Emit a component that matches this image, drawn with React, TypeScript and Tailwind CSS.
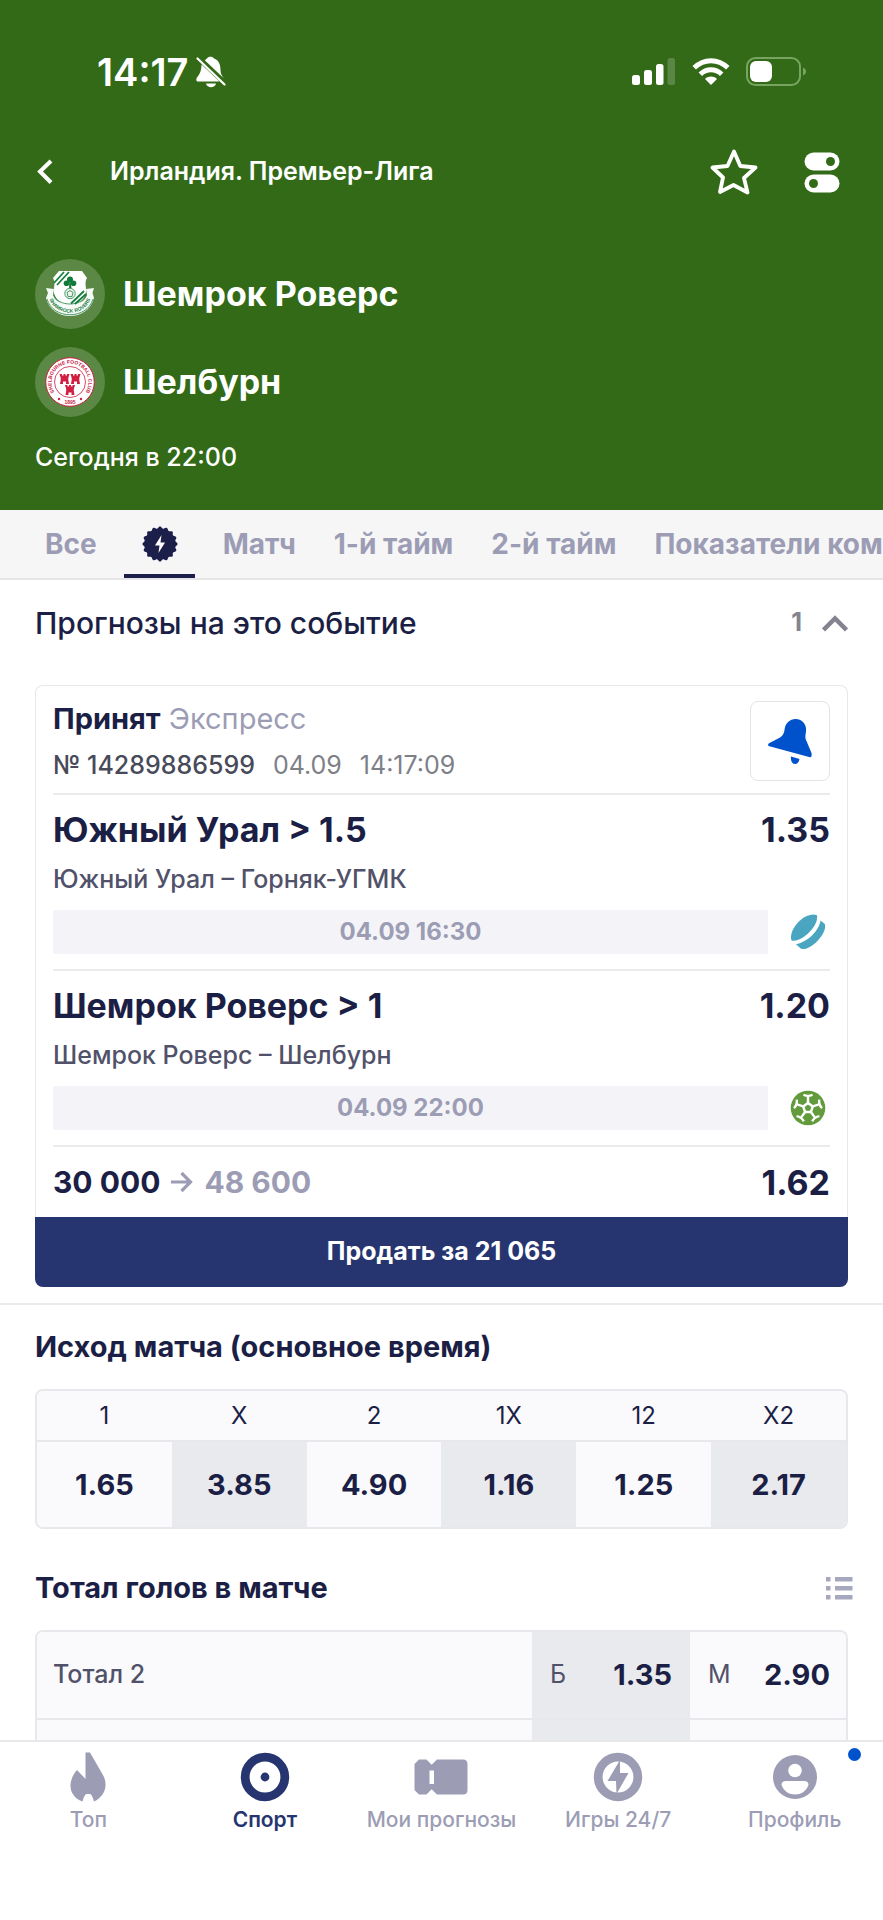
import React from "react";

type Leg = {
  title: string;
  odd: string;
  match: string;
  start: string;
  sport: "hockey" | "football";
};

const legs: Leg[] = [
  {
    title: "Южный Урал > 1.5",
    odd: "1.35",
    match: "Южный Урал – Горняк-УГМК",
    start: "04.09 16:30",
    sport: "hockey",
  },
  {
    title: "Шемрок Роверс > 1",
    odd: "1.20",
    match: "Шемрок Роверс – Шелбурн",
    start: "04.09 22:00",
    sport: "football",
  },
];

const outcomes = [
  { label: "1", odd: "1.65" },
  { label: "X", odd: "3.85" },
  { label: "2", odd: "4.90" },
  { label: "1X", odd: "1.16" },
  { label: "12", odd: "1.25" },
  { label: "X2", odd: "2.17" },
];

const BellOffIcon = () => (
  <svg width="30" height="33" viewBox="0 0 30 33" fill="#fff">
    <path d="M8 6C9 4 10 3 11 2.500C12 0 17 0 18 2.500C23 4 24.500 9 24.500 14C24.500 18 26 20 28 22.500L9 4.500Z" />
    <path d="M5.500 8.500L23.500 25.500H2C0 25.500 0 23 1 21.500C4 18 5.500 14 5.500 8.500Z" />
    <path d="M10 27.500H20C19 32.500 11 32.500 10 27.500Z" />
    <path d="M1.500 2.500L28.500 28.500" stroke="#fff" strokeWidth="2.200" strokeLinecap="round" />
  </svg>
);

const SignalIcon = () => (
  <svg width="44" height="28" viewBox="0 0 44 28" fill="#fff">
    <rect x="0" y="17" width="8" height="10" rx="2.500" />
    <rect x="12" y="12" width="8" height="15" rx="2.500" />
    <rect x="24" y="6" width="7.500" height="21" rx="2.500" />
    <rect x="35.500" y="0" width="7.500" height="27" rx="2.500" opacity="0.2" />
  </svg>
);

const WifiIcon = () => (
  <svg width="38" height="28" viewBox="0 0 38 28" fill="none" stroke="#fff" strokeWidth="5">
    <path d="M2.200 9.800C12 0.300 26 0.300 35.800 9.800" />
    <path d="M8.300 16.200C14.500 10.300 23.500 10.300 29.700 16.200" />
    <path d="M13 21C16.500 17.800 21.500 17.800 25 21L19 27Z" fill="#fff" stroke="none" />
  </svg>
);

const BatteryIcon = () => (
  <svg width="62" height="30" viewBox="0 0 62 30">
    <rect x="1" y="1" width="53" height="27" rx="8.500" fill="none" stroke="#77a45f" strokeWidth="2" />
    <rect x="4" y="4" width="22" height="21" rx="6" fill="#fff" />
    <path d="M57 10.500C61 12 61 17 57 18.500Z" fill="#77a45f" />
  </svg>
);

const StarIcon = () => (
  <svg width="48" height="46" viewBox="0 0 48 46" fill="none" stroke="#fff" strokeWidth="3.800" strokeLinejoin="round">
    <path d="M24 2.500L30.300 17L45.500 18.500L34 29L37.500 43.500L23.500 36L10 43L13 28.500L2.500 18.500L17.500 17Z" />
  </svg>
);

const TogglesIcon = () => (
  <svg width="36" height="41" viewBox="0 0 36 41">
    <rect x="0.500" y="0.500" width="35" height="18" rx="9" fill="#fff" />
    <circle cx="26.500" cy="9.500" r="4.500" fill="#326a17" />
    <rect x="0.500" y="22.500" width="35" height="18" rx="9" fill="#fff" />
    <circle cx="9.500" cy="31.500" r="4.500" fill="#326a17" />
  </svg>
);

const ShamrockCrest = () => (
  <svg width="50" height="48" viewBox="0 0 50 48">
    <defs>
      <path id="ribbon" d="M3.500 25C7 48.500 43 48.500 46.500 25" />
    </defs>
    <path d="M14 1H37L42 8C38 14 44 20 39 28C36 33 30 36 25 38C20 36 14 33 11 28C6 20 12 14 8 8Z" fill="#fff" />
    <path d="M9 13L19 2M12 15L24 2" stroke="#15803f" strokeWidth="1.800" />
    <g fill="#0f7a3a">
      <circle cx="25" cy="9.500" r="3" />
      <circle cx="21.500" cy="13.300" r="2.800" />
      <circle cx="28.500" cy="13.300" r="2.800" />
      <path d="M24.300 12H25.700L26.500 18H24Z" />
    </g>
    <path d="M1 18L9 19L8 25C12 38 38 38 42 25L41 19L49 18L47.500 23L49 28C43 52 7 52 1 28L3 23Z" fill="#f4faf5" />
    <path d="M9 25C13 37 37 37 41 25M2 29C8 50 42 50 48 29" fill="none" stroke="#237f45" strokeWidth="0.800" />
    <text fontSize="5" fontWeight="700" fill="#1c7a40" textAnchor="middle" fontFamily="Liberation Sans, sans-serif">
      <textPath href="#ribbon" startOffset="50%">
        SHAMROCK ROVERS
      </textPath>
    </text>
    <circle cx="25" cy="23.500" r="5.200" fill="#e9f4ec" stroke="#4c9967" strokeWidth="1" />
    <path d="M25 20.500L28 22.500L27 26.500H23L22 22.500Z" fill="none" stroke="#4c9967" strokeWidth="1" />
    <path d="M26 33.500L39 21M30 34L41 24" stroke="#15803f" strokeWidth="1.800" />
  </svg>
);

const castle = "M0 0H2.500V1.500H4V0H6V1.500H7.500V0H10L8.800 4V6L9.500 10H6.500V7.500H3.500V10H0.500L1.200 6V4Z";

const ShelbourneCrest = () => (
  <svg width="50" height="50" viewBox="0 0 50 50">
    <defs>
      <path id="ring" d="M11.900 38.100A18.500 18.500 0 1 1 38.100 38.100" />
    </defs>
    <circle cx="25" cy="25" r="24.300" fill="#fff" stroke="#c8203f" strokeWidth="1" />
    <circle cx="25" cy="25" r="15.500" fill="none" stroke="#c8203f" strokeWidth="0.800" />
    <text fontSize="5" fontWeight="700" fill="#c8203f" textAnchor="middle" fontFamily="Liberation Sans, sans-serif">
      <textPath href="#ring" startOffset="50%">
        SHELBOURNE FOOTBALL CLUB
      </textPath>
    </text>
    <text x="25" y="47" fontSize="5" fontWeight="700" fill="#c8203f" textAnchor="middle" fontFamily="Liberation Sans, sans-serif">
      1895
    </text>
    <circle cx="14" cy="42" r="1.200" fill="#c8203f" />
    <circle cx="36" cy="42" r="1.200" fill="#c8203f" />
    <g fill="#d01f42">
      <path d={castle} transform="translate(14.500 17)" />
      <path d={castle} transform="translate(25.500 17)" />
      <path d={castle} transform="translate(20 28)" />
    </g>
  </svg>
);

// wavy edge of the round badge, 16 bumps
const badgePoints = Array.from({ length: 160 }, (_, i) => {
  const a = (i / 160) * Math.PI * 2;
  const r = 16.6 + Math.cos(a * 16);
  return `${(18 + Math.sin(a) * r).toFixed(2)},${(18 - Math.cos(a) * r).toFixed(2)}`;
}).join(" ");

const BadgeIcon = () => (
  <svg width="36" height="36" viewBox="0 0 36 36">
    <polygon points={badgePoints} fill="#1c1f4a" />
    <path d="M19.500 9L13 19.500H17.500L16.500 27L23 16.500H18.500Z" fill="#fff" />
  </svg>
);

const BellIcon = () => (
  <svg width="46" height="47" viewBox="0 0 46 47" fill="#0052cc">
    <path d="M1.500 28C0.500 26.500 1.500 25.500 3 24.800L13 19.500C16 17.500 17 15 17.500 12C18 5 23 1 28.500 1C35.500 1 40 7 39 13.500C38.300 18 38 20 39.500 23L44.500 35C45 37.500 44.500 39.500 43 39.200Z" />
    <path d="M24 38.500L32.500 41C32 44.500 30 46 28 46C25 46 23.500 42.500 24 38.500Z" />
  </svg>
);

const PuckIcon = () => (
  <svg width="36" height="36" viewBox="0 0 36 36" fill="#4aa5c1">
    <path d="M1.500 26.500C-0.500 20 4 12 10 6.500C16 1.500 22 -0.500 27 1.200C28 7 24 14 18 19.500C12.500 24.500 6.500 27.500 1.500 26.500Z" />
    <path d="M6 30.200C11 29.500 17 26 22 21.500C27 16.500 30 11 30.500 6.500L34.800 10C36.500 15 32 23 26 28.500C20.500 33.500 15 36 11 34.800Z" />
  </svg>
);

const BallIcon = () => (
  <svg width="36" height="36" viewBox="-18 -18 36 36">
    <circle r="17.300" fill="#629b3c" />
    <g fill="none" stroke="#fff" strokeWidth="2.400">
      <path d="M0 -5L4.800 -1.500L2.900 4H-2.900L-4.800 -1.500Z" />
      {[0, 72, 144, 216, 288].map((angle) => (
        <path key={angle} d="M0 -5V-12.500M-4.500 -13.300C-2 -12 2 -12 4.500 -13.300" transform={`rotate(${angle})`} />
      ))}
    </g>
  </svg>
);

const ListIcon = () => (
  <svg width="27" height="23" viewBox="0 0 27 23" fill="#a6a8bf">
    <path d="M0 0H4.500V4.500H0ZM9 0H26.500V4.500H9ZM0 9H4.500V13.500H0ZM9 9H26.500V13.500H9ZM0 18H4.500V22.500H0ZM9 18H26.500V22.500H9Z" />
  </svg>
);

const FlameIcon = () => (
  <svg width="36" height="50" viewBox="0 0 36 50" fill="currentColor">
    <path d="M15.500 0.500H20L33.500 24C38.500 34 34 45 24 49.500C23 46 21.500 42 20 42H16.500C15 42 13.500 46 12.500 49.500C3 46 -0.500 38 0.700 31C1.500 26 4 21 7 18L15.500 27Z" />
  </svg>
);

const SportIcon = () => (
  <svg width="50" height="50" viewBox="0 0 50 50">
    <circle cx="25" cy="25" r="19.800" fill="none" stroke="currentColor" strokeWidth="8.800" />
    <circle cx="25" cy="25" r="4.400" fill="currentColor" />
  </svg>
);

const TicketIcon = () => (
  <svg width="54" height="50" viewBox="0 0 54 50" fill="currentColor" fillRule="evenodd">
    <path d="M5 7.500H12.500L17.700 12.700L23 7.500H49Q53.500 7.500 53.500 12V38Q53.500 42.500 49 42.500H23L17.700 37.300L12.500 42.500H5L0.500 38V12ZM15.500 18.500V32H20V18.500Z" />
  </svg>
);

const GamesIcon = () => (
  <svg width="50" height="50" viewBox="0 0 50 50">
    <circle cx="25" cy="25" r="19.800" fill="none" stroke="currentColor" strokeWidth="8.800" />
    <path d="M27 8L14.500 29H23L23.500 42L35.500 21H27Z" fill="currentColor" />
  </svg>
);

const ProfileIcon = () => (
  <svg width="50" height="50" viewBox="0 0 50 50">
    <circle cx="25" cy="25" r="22" fill="currentColor" />
    <circle cx="25" cy="18.500" r="6.800" fill="#fff" />
    <path d="M16 29H34Q38.500 29 38.500 33C36 39.500 31 42.500 25 42.500C19 42.500 14 39.500 11.500 33Q11.500 29 16 29Z" fill="#fff" />
  </svg>
);

const tabs = ["Матч", "1-й тайм", "2-й тайм", "Показатели команд"];

const navItems = [
  { label: "Топ", icon: <FlameIcon /> },
  { label: "Спорт", icon: <SportIcon />, active: true },
  { label: "Мои прогнозы", icon: <TicketIcon /> },
  { label: "Игры 24/7", icon: <GamesIcon /> },
  { label: "Профиль", icon: <ProfileIcon />, dot: true },
];

const Header = () => (
  <header className="bg-[#326a17] px-[35px] pb-[37px] text-white">
    <div className="flex h-36 items-center justify-between pr-10 pl-[62px]">
      <div className="flex items-center gap-2">
        <span className="text-[38px] font-semibold">14:17</span>
        <BellOffIcon />
      </div>
      <div className="flex items-center gap-4">
        <SignalIcon />
        <WifiIcon />
        <BatteryIcon />
      </div>
    </div>
    <div className="flex h-14 items-center">
      <button aria-label="Назад" className="w-[75px]">
        <svg width="20" height="26" viewBox="0 0 20 26" fill="none" stroke="#fff" strokeWidth="4">
          <path d="M16 2L5 12.500L16 23.500" />
        </svg>
      </button>
      <h1 className="flex-1 text-[25px] font-semibold">Ирландия. Премьер-Лига</h1>
      <div className="flex items-center gap-[46px] pr-2">
        <button aria-label="В избранное">
          <StarIcon />
        </button>
        <button aria-label="Настройки">
          <TogglesIcon />
        </button>
      </div>
    </div>
    <div className="mt-[59px] flex flex-col gap-[18px]">
      <div className="flex items-center gap-[18px]">
        <div className="flex size-[70px] items-center justify-center rounded-full bg-[#5b8845]">
          <ShamrockCrest />
        </div>
        <span className="text-[34px] leading-10 font-bold">Шемрок Роверс</span>
      </div>
      <div className="flex items-center gap-[18px]">
        <div className="flex size-[70px] items-center justify-center rounded-full bg-[#5b8845]">
          <ShelbourneCrest />
        </div>
        <span className="text-[34px] leading-10 font-bold">Шелбурн</span>
      </div>
    </div>
    <p className="mt-6 text-[25px] leading-8 font-medium">Сегодня в 22:00</p>
  </header>
);

const Tabs = () => (
  <nav className="flex h-[70px] overflow-hidden border-b-2 border-[#e6e6e8] bg-[#f6f6f7] pl-[26px] text-[28px] font-bold whitespace-nowrap text-[#9c9db5]">
    <button className="px-[19px]">Все</button>
    <button aria-label="Прогнозы" className="flex w-[88px] shrink-0 flex-col items-center justify-between pt-4">
      <BadgeIcon />
      <span className="h-1 w-[71px] bg-[#1c1f4a]" />
    </button>
    {tabs.map((tab) => (
      <button key={tab} className="px-[19px]">
        {tab}
      </button>
    ))}
  </nav>
);

const BetLeg = ({ leg }: { leg: Leg }) => (
  <div className="border-b-2 border-[#ebebed] py-[15px]">
    <div className="flex justify-between text-[34px] leading-10 font-bold">
      <h3>{leg.title}</h3>
      <span>{leg.odd}</span>
    </div>
    <p className="mt-[13px] text-[25px] leading-8 font-medium text-[#51526a]">{leg.match}</p>
    <div className="mt-[15px] flex items-center gap-[22px]">
      <div className="flex h-11 flex-1 items-center justify-center bg-[#f4f4f8] text-2xl font-bold text-[#9c9db5]">
        {leg.start}
      </div>
      <div className="pr-1">{leg.sport === "hockey" ? <PuckIcon /> : <BallIcon />}</div>
    </div>
  </div>
);

const BetCard = () => (
  <article className="mx-[35px] mt-[19px] mb-4">
    <div className="rounded-t-lg border border-b-0 border-[#e8e8ea] px-[17px]">
      <div className="flex justify-between border-b-2 border-[#ebebed] pt-[15px] pb-3">
        <div>
          <p className="text-[29px] leading-9">
            <span className="font-bold">Принят</span> <span className="text-[#9c9db5]">Экспресс</span>
          </p>
          <p className="mt-3 flex gap-[18px] text-[25px] leading-8 text-[#7e8088]">
            <span className="font-medium text-[#484a59]">№ 14289886599</span>
            <span>04.09</span>
            <span>14:17:09</span>
          </p>
        </div>
        <button
          aria-label="Уведомления"
          className="flex size-20 items-center justify-center rounded-lg border border-[#e3e3e6]"
        >
          <BellIcon />
        </button>
      </div>
      {legs.map((leg) => (
        <BetLeg key={leg.title} leg={leg} />
      ))}
      <div className="flex h-[70px] items-center justify-between text-[34px] font-bold">
        <p className="flex items-center gap-[11px] text-[30px]">
          30 000
          <svg width="22" height="22" viewBox="0 0 22 22" fill="none" stroke="#9c9db5" strokeWidth="3.200">
            <path d="M0 11H19M10.500 2L19.500 11L10.500 20" />
          </svg>
          <span className="text-[#9c9db5]">48 600</span>
        </p>
        <span>1.62</span>
      </div>
    </div>
    <button className="h-[70px] w-full rounded-b-lg bg-[#26356f] text-[25px] font-bold text-white">
      Продать за 21 065
    </button>
  </article>
);

const OutcomeTable = () => (
  <div className="mx-[35px] overflow-hidden rounded-lg border-2 border-[#e8e8ec]">
    <table className="w-full table-fixed bg-[#fafafc] text-center">
      <thead>
        <tr className="border-b-2 border-[#e8e8ec]">
          {outcomes.map((o) => (
            <th key={o.label} className="h-[50px] text-2xl font-normal">
              {o.label}
            </th>
          ))}
        </tr>
      </thead>
      <tbody>
        <tr>
          {outcomes.map((o) => (
            <td key={o.label} className="h-[86px] even:bg-[#e9eaee]">
              <button className="size-full text-[29px] font-bold">{o.odd}</button>
            </td>
          ))}
        </tr>
      </tbody>
    </table>
  </div>
);

const TotalTable = () => (
  <div className="mx-[35px] overflow-hidden rounded-t-lg border-2 border-b-0 border-[#e8e8ec]">
    <table className="w-full table-fixed bg-[#fafafc] text-[25px] text-[#51526a]">
      <tbody>
        <tr className="border-b-2 border-[#e8e8ec]">
          <th className="h-[87px] pl-4 text-left font-medium">Тотал 2</th>
          <td className="w-[158px] bg-[#e9eaee]">
            <button className="flex w-full items-center justify-between px-[18px]">
              Б <span className="text-[29px] font-bold text-[#1c1f45]">1.35</span>
            </button>
          </td>
          <td className="w-[156px]">
            <button className="flex w-full items-center justify-between pr-4 pl-[18px]">
              М <span className="text-[29px] font-bold text-[#1c1f45]">2.90</span>
            </button>
          </td>
        </tr>
        <tr>
          <th className="h-[87px]" />
          <td className="bg-[#e9eaee]" />
          <td />
        </tr>
      </tbody>
    </table>
  </div>
);

const BottomNav = () => (
  <nav className="grid h-[180px] shrink-0 grid-cols-5 items-start border-t-2 border-[#e8e8ea] bg-white pt-2.5">
    {navItems.map((item) => (
      <a
        key={item.label}
        href="#"
        className={`relative flex flex-col items-center gap-1 text-[21px] leading-7 whitespace-nowrap ${
          item.active ? "font-semibold text-[#26356f]" : "font-medium text-[#9c9db5]"
        }`}
      >
        {item.icon}
        {item.label}
        {item.dot && <span className="absolute -top-1 right-[22px] size-[13px] rounded-full bg-[#0052cc]" />}
      </a>
    ))}
  </nav>
);

const App: React.FC = () => {
  return (
    <div className="flex h-screen flex-col bg-white font-['Inter','Noto_Sans',sans-serif] text-[#1c1f45]">
      <main className="min-h-0 flex-1 overflow-hidden">
        <Header />
        <Tabs />
        <section className="border-b-2 border-[#ebebed]">
          <div className="flex h-[86px] items-center justify-between px-[35px]">
            <h2 className="text-[30px] font-medium">Прогнозы на это событие</h2>
            <button aria-label="Свернуть" className="flex items-center gap-5 text-[25px] font-bold text-[#83848f]">
              1
              <svg width="26" height="17" viewBox="0 0 26 17" fill="none" stroke="#83848f" strokeWidth="4.500">
                <path d="M1.500 15L13 3.500L24.500 15" />
              </svg>
            </button>
          </div>
          <BetCard />
        </section>
        <section>
          <h2 className="flex h-[84px] items-center px-[35px] text-[29px] font-bold">Исход матча (основное время)</h2>
          <OutcomeTable />
        </section>
        <section className="mt-[17px]">
          <div className="flex h-[84px] items-center justify-between pr-[30px] pl-[35px]">
            <h2 className="text-[29px] font-bold">Тотал голов в матче</h2>
            <button aria-label="Список">
              <ListIcon />
            </button>
          </div>
          <TotalTable />
        </section>
      </main>
      <BottomNav />
    </div>
  );
};

export default App;
